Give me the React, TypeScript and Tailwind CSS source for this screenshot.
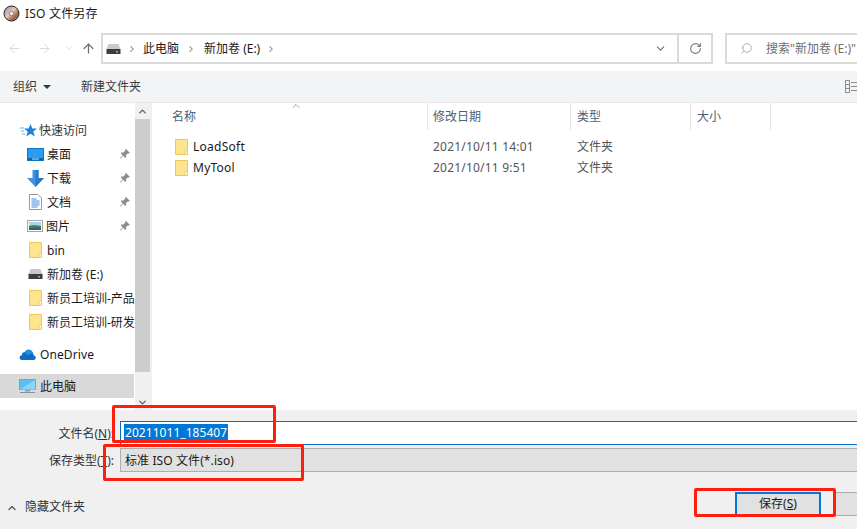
import { ArrowLeft, ArrowRight, ArrowUp, ChevronDown, ChevronRight, ChevronUp, RotateCw, Search } from "lucide-react"

const DiscIcon = () => (
  <svg width="17" height="17" viewBox="0 0 17 17">
    <defs>
      <linearGradient id="disc" x1="0" y1="0" x2="1" y2="1">
        <stop offset="0" stopColor="#8a7fc9" />
        <stop offset="0.45" stopColor="#e3c9b4" />
        <stop offset="0.7" stopColor="#a8694a" />
        <stop offset="1" stopColor="#6b5fa8" />
      </linearGradient>
    </defs>
    <circle cx="8.5" cy="8.5" r="7.5" fill="url(#disc)" stroke="#222" strokeWidth="1" />
    <circle cx="8.5" cy="8.5" r="2.2" fill="#f4efe9" stroke="#5b4a44" strokeWidth="0.6" />
  </svg>
)

const FolderIcon = () => (
  <svg width="13" height="16" viewBox="0 0 13 16" className="shrink-0">
    <path d="M.5.5h12v15H.5z" fill="#fde58f" stroke="#eec759" />
    <path d="M10 11h2.500v4.500H10z" fill="#fff3c4" stroke="#eec759" strokeWidth="0.8" />
  </svg>
)

const DriveIcon = () => (
  <svg width="15" height="10" viewBox="0 0 15 10" className="shrink-0">
    <path d="M2.500 0h10l2 5H.5z" fill="#c9c9c9" />
    <rect x="0.500" y="5" width="14" height="5" fill="#3d3d3d" />
    <rect x="10" y="7" width="2" height="1.500" fill="#5be06a" />
  </svg>
)

const DesktopIcon = () => (
  <svg width="17" height="13" viewBox="0 0 17 13" className="shrink-0">
    <rect x="0.500" y="0.500" width="16" height="12" fill="#2b9cf2" stroke="#0a76c9" />
    <rect x="1" y="10" width="15" height="2" fill="#0b64ad" />
    <rect x="5" y="10.500" width="7" height="1" fill="#bfe3fb" />
  </svg>
)

const DownloadIcon = () => (
  <svg width="17" height="17" viewBox="0 0 17 17" className="shrink-0">
    <path d="M5.500 0h6v8H17l-8.500 9L0 8h5.500z" fill="#3f93e3" />
    <path d="M8.500 0h3v8H17l-8.500 9z" fill="#2a78c9" />
  </svg>
)

const DocIcon = () => (
  <svg width="13" height="16" viewBox="0 0 13 16" className="shrink-0">
    <path d="M.5.5h8.500l3.500 3.500v11.500H.5z" fill="#fff" stroke="#9a9a9a" />
    <path d="M2.500 5h5M2.500 7h8M2.500 9h8M2.500 11h8M2.500 13h6" stroke="#3d8bd4" strokeWidth="1" />
  </svg>
)

const PictureIcon = () => (
  <svg width="16" height="12" viewBox="0 0 16 12" className="shrink-0">
    <rect x="0.500" y="0.500" width="15" height="11" fill="#fff" stroke="#a5a5a5" />
    <rect x="2" y="2" width="12" height="4" fill="#a9d3ec" />
    <path d="M2 6l5-1 7 1v4H2z" fill="#4c7a57" />
    <rect x="2" y="8" width="12" height="2" fill="#2f5f7c" />
  </svg>
)

const CloudIcon = () => (
  <svg width="17" height="12" viewBox="0 0 17 12" className="shrink-0">
    <path d="M3 12h11.500c2.800 0 3.200-4 .3-4.500C14.500 3 9.500 2 8 4.500 5 3 2.500 5 3 7 0 7.500-.5 12 3 12z" fill="#0f6cc2" />
    <path d="M5.500 4.500C7 .5 12.500.5 14 5l-5 2z" fill="#1f8fe0" />
  </svg>
)

const PcIcon = () => (
  <svg width="17" height="15" viewBox="0 0 17 15" className="shrink-0">
    <rect x="0.500" y="0.500" width="16" height="10" fill="#5cc0f5" stroke="#7fa3bd" />
    <path d="M1 10.500L16 1v9.500z" fill="#8ad6fa" />
    <rect x="6" y="11" width="5" height="1.500" fill="#8aa0b0" />
    <rect x="1" y="13" width="15" height="1" fill="#7d93a3" />
  </svg>
)

const PinIcon = () => (
  <svg width="10" height="10" viewBox="0 0 10 10" className="shrink-0">
    <path d="M6 0l4 4-1 .6-1-.4-2 2 .2 2-.8.8-2.200-2.200L.5 9.500 0 9l2.700-2.700L.6 4.200l.8-.8 2 .2 2-2-.4-1z" fill="#8c8c8c" />
  </svg>
)

const centered = (icon: React.ReactNode) => <div className="flex w-[17px] justify-center">{icon}</div>

const navRows = [
  { icon: <DesktopIcon />, label: "桌面", pin: true },
  { icon: <DownloadIcon />, label: "下载", pin: true },
  { icon: centered(<DocIcon />), label: "文档", pin: true },
  { icon: <PictureIcon />, label: "图片", pin: true },
  { icon: centered(<FolderIcon />), label: "bin", pin: false },
  { icon: centered(<DriveIcon />), label: "新加卷 (E:)", pin: false },
  { icon: centered(<FolderIcon />), label: "新员工培训-产品", pin: false },
  { icon: centered(<FolderIcon />), label: "新员工培训-研发", pin: false },
]

const files = [
  { name: "LoadSoft", date: "2021/10/11 14:01" },
  { name: "MyTool", date: "2021/10/11 9:51" },
]

const App: React.FC = () => {
  return (
    <div className="relative flex h-[529px] w-[857px] flex-col overflow-hidden bg-white text-[12px] text-[#1a1a1a] font-['Noto_Sans','Noto_Sans_CJK_SC',sans-serif]">
      {/* title */}
      <div className="flex h-[26px] items-center gap-[5px] pl-[3px]">
        <DiscIcon />
        <span className="pt-[2px] tracking-[0.2px]">ISO 文件另存</span>
      </div>

      {/* nav */}
      <div className="flex h-[45px] items-start pt-[7px]">
        <div className="flex h-[30px] w-[101px] items-center pl-[7px] text-[#d6d6d6]">
          <ArrowLeft size={15} strokeWidth={1.500} />
          <ArrowRight size={15} strokeWidth={1.500} className="ml-[15px]" />
          <ChevronDown size={10} strokeWidth={2} className="ml-[12px]" />
          <ArrowUp size={15} strokeWidth={2} className="ml-[7px] text-[#6f6f6f]" />
        </div>
        <div className="flex h-[31px] w-[612px] items-center border-2 border-[#dadada] pl-[3px]">
          <DriveIcon />
          <ChevronRight size={10} strokeWidth={2.500} className="ml-[6px] text-[#808080]" />
          <span className="ml-[6px]">此电脑</span>
          <ChevronRight size={10} strokeWidth={2.500} className="ml-[7px] text-[#808080]" />
          <span className="ml-[8px]">新加卷 (E:)</span>
          <ChevronRight size={10} strokeWidth={2.500} className="ml-[6px] text-[#808080]" />
          <ChevronDown size={13} strokeWidth={2} className="ml-auto mr-[10px] text-[#6f6f6f]" />
          <div className="flex h-full w-[34px] items-center justify-center border-l-2 border-[#dadada]">
            <RotateCw size={13} strokeWidth={2} className="text-[#7a7a7a]" />
          </div>
        </div>
        <div className="ml-[12px] flex h-[31px] flex-1 items-center overflow-hidden whitespace-nowrap border-2 border-r-0 border-[#dadada] pl-[13px] text-[#6d6d6d]">
          <Search size={13} strokeWidth={1.200} className="shrink-0 -scale-x-100 text-[#8a8a8a]" />
          <span className="ml-[13px]">搜索"新加卷 (E:)"</span>
        </div>
      </div>

      {/* toolbar */}
      <div className="flex h-[31px] items-center bg-[#f3f4f6] pl-[13px] text-[#3c3c3c]">
        <span className="pt-[1px]">组织</span>
        <div className="ml-[6px] h-0 w-0 border-x-[4px] border-t-[4px] border-x-transparent border-t-[#1f3a5c]" />
        <span className="ml-[30px] pt-[1px]">新建文件夹</span>
        <svg width="12" height="13" viewBox="0 0 12 13" className="ml-auto">
          <path d="M.5.5h4v12h-4zM.5 4.500h4M.5 8.500h4M6 2.500h6M6 6.500h6M6 10.500h6" fill="none" stroke="#8a8a8a" />
        </svg>
      </div>

      {/* body */}
      <div className="flex h-[308px] border-t border-[#e8e8e8]">
        <div className="flex w-[135px] flex-col overflow-hidden pt-[15px]">
          <div className="flex h-[24px] items-center gap-[1px] pl-[20px]">
            <svg width="18" height="15" viewBox="0 0 18 15" className="shrink-0">
              <path d="M10.500 1l1.800 4.500H17l-3.700 3 1.500 5-4.300-2.800-4.300 2.800 1.500-5-3.700-3h4.700z" fill="#1f82d8" />
              <path d="M0 5h4M1 8h3M2 11h3" stroke="#62b3ee" strokeWidth="1" />
            </svg>
            <span className="pt-[1px] text-[#333]">快速访问</span>
          </div>
          {navRows.map((row) => (
            <div key={row.label} className="flex h-[24px] items-center pl-[27px]">
              {row.icon}
              <span className="ml-[3px] flex-1 overflow-hidden whitespace-nowrap pt-[1px]">{row.label}</span>
              {row.pin && <div className="mr-[5px]"><PinIcon /></div>}
            </div>
          ))}
          <div className="mt-[8px] flex h-[24px] items-center gap-[4px] pl-[19px]">
            <CloudIcon />
            <span className="pt-[1px] tracking-[0.1px]">OneDrive</span>
          </div>
          <div className="mt-[8px] flex h-[24px] w-[134px] items-center gap-[4px] bg-[#d9d9d9] pl-[19px]">
            <PcIcon />
            <span className="pt-[1px]">此电脑</span>
          </div>
        </div>

        {/* scrollbar */}
        <div className="flex w-[17px] flex-col bg-[#f0f0f0] pr-[2px]">
          <div className="flex h-[16px] items-center justify-center">
            <ChevronUp size={11} strokeWidth={3} className="text-[#606060]" />
          </div>
          <div className="h-[253px] bg-[#cdcdcd]" />
          <div className="mt-auto flex h-[16px] items-center justify-center">
            <ChevronDown size={11} strokeWidth={3} className="text-[#606060]" />
          </div>
        </div>

        {/* file list */}
        <div className="relative flex-1">
          <div className="grid h-[27px] grid-cols-[276px_143px_120px_80px] items-center text-[#4c607a]">
            <div className="flex h-full items-center border-r border-[#e5e5e5] pl-[20px]">名称</div>
            <div className="flex h-full items-center border-r border-[#e5e5e5] pl-[5px]">修改日期</div>
            <div className="flex h-full items-center border-r border-[#e5e5e5] pl-[6px]">类型</div>
            <div className="flex h-full items-center border-r border-[#e5e5e5] pl-[6px]">大小</div>
          </div>
          <ChevronUp size={12} strokeWidth={1.500} className="absolute left-[138px] top-[-3px] text-[#808080]" />
          <div className="mt-[6px] flex flex-col">
            {files.map((file) => (
              <div key={file.name} className="grid h-[21px] grid-cols-[276px_143px_120px] items-center">
                <div className="flex items-center gap-[5px] pl-[23px]">
                  <FolderIcon />
                  <span className="tracking-[0.25px]">{file.name}</span>
                </div>
                <div className="pl-[5px] tracking-[0.2px] text-[#555]">{file.date}</div>
                <div className="pl-[6px] text-[#555]">文件夹</div>
              </div>
            ))}
          </div>
        </div>
      </div>

      {/* save panel */}
      <div className="flex flex-1 flex-col bg-[#f0f0f0] pt-[11px]">
        <div className="flex h-[24px] items-center">
          <label className="w-[115px] pr-[1px] pt-[2px] text-right text-[#333]">文件名(<span className="underline">N</span>):</label>
          <div className="ml-[5px] flex h-full flex-1 items-center border border-r-0 border-[#0a6cc4] bg-white pl-[3px]">
            <span className="bg-[#0078d7] px-[1px] leading-[18px] tracking-[0.05px] text-white">20211011_185407</span>
          </div>
        </div>
        <div className="mt-[3px] flex h-[24px] items-center">
          <label className="w-[115px] pr-[1px] pt-[2px] text-right text-[#333]">保存类型(<span className="underline">T</span>):</label>
          <div className="ml-[5px] flex h-full flex-1 items-center border border-r-0 border-[#adadad] bg-[#e1e1e1] pl-[4px] pt-[2px] tracking-[0.1px]">
            标准 ISO 文件(*.iso)
          </div>
        </div>
        <div className="mt-[20px] flex h-[24px] items-center">
          <ChevronUp size={12} strokeWidth={2.500} className="ml-[6px] mt-[7px] text-[#555]" />
          <span className="ml-[7px] mt-[6px] text-[#333]">隐藏文件夹</span>
          <button className="ml-auto h-full w-[86px] border-2 border-[#0078d7] bg-[#e1e1e1] text-[12px]">
            保存(<span className="underline">S</span>)
          </button>
          <div className="ml-[15px] h-full w-[21px] border-y border-[#adadad] bg-[#e1e1e1]" />
        </div>
      </div>

      {/* red annotations */}
      <div className="absolute left-[112px] top-[405px] h-[38px] w-[164px] rounded-[2px] border-[3px] border-[#fe1e0f]" />
      <div className="absolute left-[103px] top-[444px] h-[37px] w-[201px] rounded-[2px] border-[3px] border-[#fe1e0f]" />
      <div className="absolute left-[694px] top-[488px] h-[29px] w-[142px] rounded-[2px] border-[3px] border-[#fe1e0f]" />
    </div>
  )
}

export default App
